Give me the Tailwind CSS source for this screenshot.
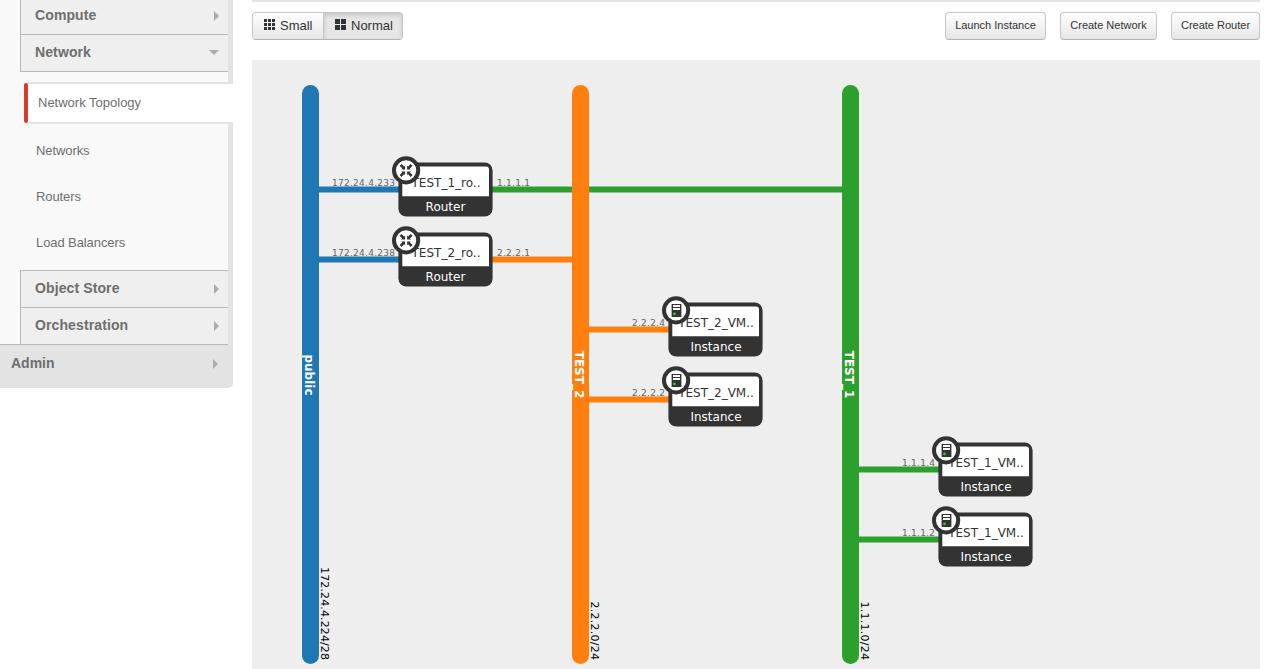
<!DOCTYPE html>
<html lang="en">
<head>
<meta charset="utf-8">
<title>Network Topology</title>
<script src="https://cdn.jsdelivr.net/npm/@tailwindcss/browser@4"></script>
</head>
<body class="flex h-[669px] items-start overflow-hidden bg-white font-['Liberation_Sans',sans-serif] text-[13px] text-[#333]">

<aside class="h-[388px] w-[233px] shrink-0 overflow-hidden rounded-br-[5px] bg-[#f9f9f9] bg-[linear-gradient(#e3e3e3,#e3e3e3)] bg-[length:5px_100%] bg-right bg-no-repeat text-[#6e6e6e]">
  <nav class="flex h-full flex-col">
    <div class="mr-[5px] ml-5 border-l border-[#b7b8b9] text-sm font-bold tracking-[0.11px]">
      <div class="flex h-[35px] items-center justify-between border-b border-[#b7b8b9] bg-[#efefef] pr-[9px] pb-1 pl-3.5 leading-5"><span>Compute</span><svg class="mt-[1px]" width="5" height="10"><path d="M0 0L5 5L0 10Z" fill="#aaabac"/></svg></div>
      <div class="flex h-[37px] items-center justify-between border-b border-[#b7b8b9] bg-[#efefef] pr-[9px] pl-3.5 leading-5"><span class="-mt-[3px]">Network</span><svg class="-mt-[1px]" width="10" height="5"><path d="M0 0H10L5 5Z" fill="#aaabac"/></svg></div>
    </div>
    <a class="mt-[10px] ml-6 flex h-[42px] items-center"><span class="h-10 w-1 rounded-[2px] bg-[#d93c27]"></span><span class="flex h-full flex-1 items-center border-y-2 border-[#e3e3e3] bg-white pl-2.5">Network Topology</span></a>
    <div class="mt-1 flex flex-col pl-9 tracking-[-0.09px]">
      <a class="flex h-[46px] items-center">Networks</a>
      <a class="flex h-[46px] items-center">Routers</a>
      <a class="flex h-[46px] items-center">Load Balancers</a>
    </div>
    <div class="mt-[4px] mr-[5px] ml-5 border-l border-[#b7b8b9] text-sm font-bold tracking-[0.11px]">
      <div class="flex h-[37px] items-center justify-between border-t border-[#b7b8b9] bg-[#efefef] pr-[9px] pl-3.5 leading-5"><span class="-mt-[3px]">Object Store</span><svg width="5" height="10"><path d="M0 0L5 5L0 10Z" fill="#aaabac"/></svg></div>
      <div class="flex h-[37px] items-center justify-between border-t border-[#b7b8b9] bg-[#efefef] pr-[9px] pl-3.5 leading-5"><span class="-mt-[3px]">Orchestration</span><svg width="5" height="10"><path d="M0 0L5 5L0 10Z" fill="#aaabac"/></svg></div>
    </div>
    <div class="mr-[5px] flex h-[44px] items-center justify-between border-t border-[#b7b8b9] bg-[#e3e3e3] pr-[10px] pb-[8px] pl-[11px] text-sm leading-5 font-bold"><span>Admin</span><svg class="mt-[2px]" width="5" height="10"><path d="M0 0L5 5L0 10Z" fill="#aaabac"/></svg></div>
  </nav>
</aside>

<main class="ml-[19px] w-[1008px] shrink-0">
  <div class="h-[2px] bg-[#e3e3e3]"></div>
  <div class="mt-[10px] flex h-7 justify-between">
    <div class="flex overflow-hidden rounded-[4px] border border-[#c5c5c5] border-b-[#b3b3b3]">
      <button class="flex w-[70px] items-center gap-[5px] bg-linear-to-b from-white to-[#e6e6e6] pl-[11px]"><svg class="-mt-[3px]" width="11" height="11" fill="#333"><path d="M0 0h3v3H0zM4 0h3v3H4zM8 0h3v3H8zM0 4h3v3H0zM4 4h3v3H4zM8 4h3v3H8zM0 8h3v3H0zM4 8h3v3H4zM8 8h3v3H8z"/></svg>Small</button>
      <button class="flex w-[79px] items-center gap-[5px] border-l border-[#c5c5c5] bg-[#e6e6e6] pl-[11px] shadow-[inset_0_2px_4px_rgba(0,0,0,0.15)]"><svg class="-mt-[3px]" width="11" height="11" fill="#333"><path d="M0 0h5v5H0zM6 0h5v5H6zM0 6h5v5H0zM6 6h5v5H6z"/></svg>Normal</button>
    </div>
    <div class="flex gap-[14px] text-[11px]">
      <button class="w-[101px] rounded-[4px] border border-[#c5c5c5] border-b-[#b3b3b3] bg-linear-to-b from-white to-[#e6e6e6] pb-[2px]">Launch Instance</button>
      <button class="w-[97px] rounded-[4px] border border-[#c5c5c5] border-b-[#b3b3b3] bg-linear-to-b from-white to-[#e6e6e6] pb-[2px]">Create Network</button>
      <button class="w-[89px] rounded-[4px] border border-[#c5c5c5] border-b-[#b3b3b3] bg-linear-to-b from-white to-[#e6e6e6] pb-[2px]">Create Router</button>
    </div>
  </div>
  <svg class="mt-5 block bg-[#eee] font-['DejaVu_Sans',sans-serif]" width="1008" height="609" viewBox="252 60 1008 609">
    <defs>
      <g id="frame">
        <rect x="-.6" y="-.6" width="94.2" height="54.2" rx="8" fill="#333"/>
        <path d="M3.3 33.3V3.5H87Q90 3.5 90 6.5V33.3Z" fill="#fff"/>
      </g>
      <g id="router-badge">
        <circle cx="7.1" cy="7.4" r="12.1" fill="#fff" stroke="#333" stroke-width="4"/>
        <g fill="#333">
          <path id="arrow" d="M6.1 6.4H2.3L3.3 5.4L.6 2.8L2.5 .9L5.1 3.6L6.1 2.6Z"/>
          <use href="#arrow" transform="rotate(90 7.1 7.4)"/>
          <use href="#arrow" transform="rotate(180 7.1 7.4)"/>
          <use href="#arrow" transform="rotate(270 7.1 7.4)"/>
        </g>
      </g>
      <g id="server-badge">
        <circle cx="7.1" cy="7.4" r="12.1" fill="#fff" stroke="#333" stroke-width="4"/>
        <path d="M2.6 1h9.8v13H2.6z" fill="#333"/>
        <path d="M4 2h7v2H4zM4 5h7v2H4z" fill="#fff"/>
        <circle cx="5.5" cy="10.9" r="1.4" fill="#3fbf3f"/>
      </g>
    </defs>

    <g stroke-width="6">
      <path d="M318 189.5H400M318 259.5H400" stroke="#1f77b4"/>
      <path d="M492 189.5H843M858 469.5H940M858 539.5H940" stroke="#2ca02c"/>
      <path d="M492 259.5H573M588 329.5H670M588 399.5H670" stroke="#ff7f0e"/>
    </g>
    <rect x="302" y="85" width="17" height="579" rx="8.5" fill="#1f77b4"/>
    <rect x="572" y="85" width="17" height="579" rx="8.5" fill="#ff7f0e"/>
    <rect x="842" y="85" width="17" height="579" rx="8.5" fill="#2ca02c"/>

    <g font-size="12" font-weight="bold" fill="#fff" text-anchor="middle">
      <text transform="translate(305 375) rotate(90)">public</text>
      <text transform="translate(575 374.5) rotate(90)">TEST_2</text>
      <text transform="translate(845 374.5) rotate(90)">TEST_1</text>
    </g>
    <g font-size="11" fill="#000">
      <text transform="translate(321 567) rotate(90)" textLength="93">172.24.4.224/28</text>
      <text transform="translate(591 601.5) rotate(90)" textLength="58.5">2.2.2.0/24</text>
      <text transform="translate(861 601.5) rotate(90)" textLength="58.5">1.1.1.0/24</text>
    </g>
    <g font-size="9" fill="#666">
      <text x="332" y="186" textLength="63">172.24.4.233</text>
      <text x="332" y="256" textLength="63">172.24.4.238</text>
      <text x="497" y="186" textLength="33">1.1.1.1</text>
      <text x="497" y="256" textLength="33">2.2.2.1</text>
      <text x="632" y="326" textLength="33">2.2.2.4</text>
      <text x="632" y="396" textLength="33">2.2.2.2</text>
      <text x="902" y="466" textLength="33">1.1.1.4</text>
      <text x="902" y="536" textLength="33">1.1.1.2</text>
    </g>

    <g font-size="12" fill="#333" text-anchor="middle">
      <g transform="translate(399 163)"><use href="#frame"/><text x="47" y="24">TEST_1_ro..</text><text x="46.5" y="48" fill="#fff">Router</text><use href="#router-badge"/></g>
      <g transform="translate(399 233)"><use href="#frame"/><text x="47" y="24">TEST_2_ro..</text><text x="46.5" y="48" fill="#fff">Router</text><use href="#router-badge"/></g>
      <g transform="translate(669 303)"><use href="#frame"/><text x="47" y="24">TEST_2_VM..</text><text x="47" y="48" fill="#fff">Instance</text><use href="#server-badge"/></g>
      <g transform="translate(669 373)"><use href="#frame"/><text x="47" y="24">TEST_2_VM..</text><text x="47" y="48" fill="#fff">Instance</text><use href="#server-badge"/></g>
      <g transform="translate(939 443)"><use href="#frame"/><text x="47" y="24">TEST_1_VM..</text><text x="47" y="48" fill="#fff">Instance</text><use href="#server-badge"/></g>
      <g transform="translate(939 513)"><use href="#frame"/><text x="47" y="24">TEST_1_VM..</text><text x="47" y="48" fill="#fff">Instance</text><use href="#server-badge"/></g>
    </g>
  </svg>
</main>
</body>
</html>
